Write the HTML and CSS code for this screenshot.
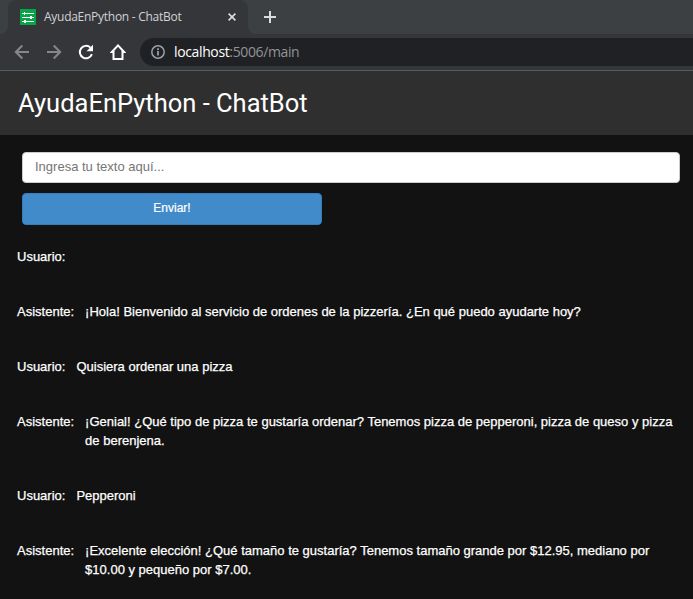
FILE: index.html
```html
<!DOCTYPE html>
<html lang="es">
<head>
<meta charset="utf-8">
<title>AyudaEnPython - ChatBot</title>
<link rel="stylesheet" href="styles.css">
</head>
<body>
<div class="browser">
  <div class="tabstrip">
    <div class="edge"></div>
    <div class="tab">
      <svg class="favicon" width="16" height="16" viewBox="0 0 16 16"><path fill="#06a545" d="M0 0h16v16H0z"/><path stroke="#fff" d="M2 4.5h12M2 8.5h12M2 12.5h12"/><path fill="#fff" d="M4 3h1v3H4zM3 4h1v1H3zM10 7h2v3h-2zM4 11h2v3H4z"/></svg>
      <span class="tab-title">AyudaEnPython - ChatBot</span>
      <svg class="close" width="8" height="8" viewBox="0 0 8 8"><path d="M.6.6l6.8 6.8M7.4.6L.6 7.4" stroke="#dadce0" stroke-width="1.6"/></svg>
    </div>
    <div class="rest">
      <svg width="12" height="12" viewBox="0 0 12 12"><path d="M6 0v12M0 6h12" stroke="#dadce0" stroke-width="2"/></svg>
    </div>
  </div>
  <div class="toolbar">
    <svg class="nav" width="16" height="16" viewBox="0 0 16 16"><path d="M15 8H2M8.3 1.5L1.8 8l6.5 6.5" fill="none" stroke="#85878a" stroke-width="2"/></svg>
    <svg class="nav" width="16" height="16" viewBox="0 0 16 16"><path d="M1 8h13M7.7 1.5L14.2 8l-6.5 6.5" fill="none" stroke="#85878a" stroke-width="2"/></svg>
    <svg class="nav" width="16" height="16" viewBox="0 0 16 16"><path d="M13.9 10.2A6.2 6.2 0 1 1 12.4 3.6" fill="none" stroke="#fff" stroke-width="2"/><path fill="#fff" d="M15 .8v6.5H8.5z"/></svg>
    <svg class="nav" width="16" height="16" viewBox="0 0 16 16"><path d="M8 1.4L14.1 8H12.5v7h-9V8H1.9z" fill="none" stroke="#fff" stroke-width="2"/></svg>
    <div class="address">
      <svg width="14" height="14" viewBox="0 0 14 14"><circle cx="7" cy="7" r="6.2" fill="none" stroke="#9aa0a6" stroke-width="1.5"/><path d="M7 6v4.5M7 3.3v1.6" stroke="#9aa0a6" stroke-width="1.8"/></svg>
      <span class="url"><b>localhost</b>:5006/main</span>
    </div>
  </div>
</div>
<header class="header">AyudaEnPython - ChatBot</header>
<main class="main">
  <form class="form">
    <input class="input" type="text" placeholder="Ingresa tu texto aquí...">
    <button class="send" type="button">Enviar!</button>
  </form>
  <div class="chat">
    <div class="row"><span class="who">Usuario:</span><p class="msg"></p></div>
    <div class="row"><span class="who">Asistente:</span><p class="msg">¡Hola! Bienvenido al servicio de ordenes de la pizzería. ¿En qué puedo ayudarte hoy?</p></div>
    <div class="row"><span class="who">Usuario:</span><p class="msg">Quisiera ordenar una pizza</p></div>
    <div class="row"><span class="who">Asistente:</span><p class="msg">¡Genial! ¿Qué tipo de pizza te gustaría ordenar? Tenemos pizza de pepperoni, pizza de queso y pizza de berenjena.</p></div>
    <div class="row"><span class="who">Usuario:</span><p class="msg">Pepperoni</p></div>
    <div class="row"><span class="who">Asistente:</span><p class="msg">¡Excelente elección! ¿Qué tamaño te gustaría? Tenemos tamaño grande por $12.95, mediano por $10.00 y pequeño por $7.00.</p></div>
  </div>
</main>
</body>
</html>
```
FILE: styles.css
```css
* { box-sizing: border-box; }
body {
  margin: 0;
  height: 599px;
  overflow: hidden;
  background: #121212;
  color: #fff;
  font-family: "Liberation Sans", Arial, sans-serif;
  font-size: 13px;
}
svg { display: block; flex: none; }
.browser { height: 71px; background: #35363a; border-bottom: 1px solid #5b5c5f; }
.tabstrip {
  display: flex;
  height: 34px;
  background: linear-gradient(#3c4043 50%, #35363a 50%);
}
.edge { width: 8px; background: #3c4043; border-bottom-right-radius: 8px; }
.tab {
  display: flex;
  align-items: center;
  width: 240px;
  padding: 0 12px;
  background: #35363a;
  border-radius: 8px 8px 0 0;
}
.tab-title {
  margin-left: 8px;
  flex: 1;
  color: #d0d2d5;
  font: 12px/16px "Open Sans", sans-serif;
  letter-spacing: -0.27px;
  white-space: nowrap;
}
.rest {
  flex: 1;
  display: flex;
  align-items: center;
  padding-left: 16px;
  background: #3c4043;
  border-bottom-left-radius: 8px;
}
.toolbar { display: flex; align-items: center; height: 36px; padding-left: 14px; }
.nav { margin-right: 16px; }
.address {
  flex: 1;
  display: flex;
  align-items: center;
  height: 28px;
  margin-left: -2px;
  padding-left: 11px;
  background: #202124;
  border-radius: 14px 0 0 14px;
}
.url {
  margin-left: 9px;
  color: #919498;
  font: 14px/20px "Open Sans", sans-serif;
  letter-spacing: -0.37px;
}
.url b { color: #fff; font-weight: 400; }
.header {
  height: 64px;
  padding-left: 18px;
  background: #2f2f2f;
  font: 25.5px/65px Roboto, sans-serif;
}
.main { padding: 17px 13px 0 17px; }
.form { display: flex; flex-direction: column; gap: 10px; padding-left: 5px; }
.input {
  height: 31px;
  padding: 0 12px 2px;
  border: 1px solid #ccc;
  border-radius: 4px;
  background: #fff;
  font: 13px "Liberation Sans", Arial, sans-serif;
}
.input::placeholder { color: #757575; }
.send {
  width: 300px;
  height: 32px;
  padding: 0 0 2px;
  border: 1px solid #357ebd;
  border-radius: 4px;
  background: #428bca;
  color: #fff;
  font: 12px "Liberation Sans", Arial, sans-serif;
  -webkit-text-stroke: 0.2px #fff;
}
.chat { display: flex; flex-direction: column; gap: 36px; margin-top: 22px; }
.row { display: flex; gap: 11px; line-height: 19px; -webkit-text-stroke: 0.25px #fff; }
.who { flex: none; }
.msg { margin: 0; }
```
